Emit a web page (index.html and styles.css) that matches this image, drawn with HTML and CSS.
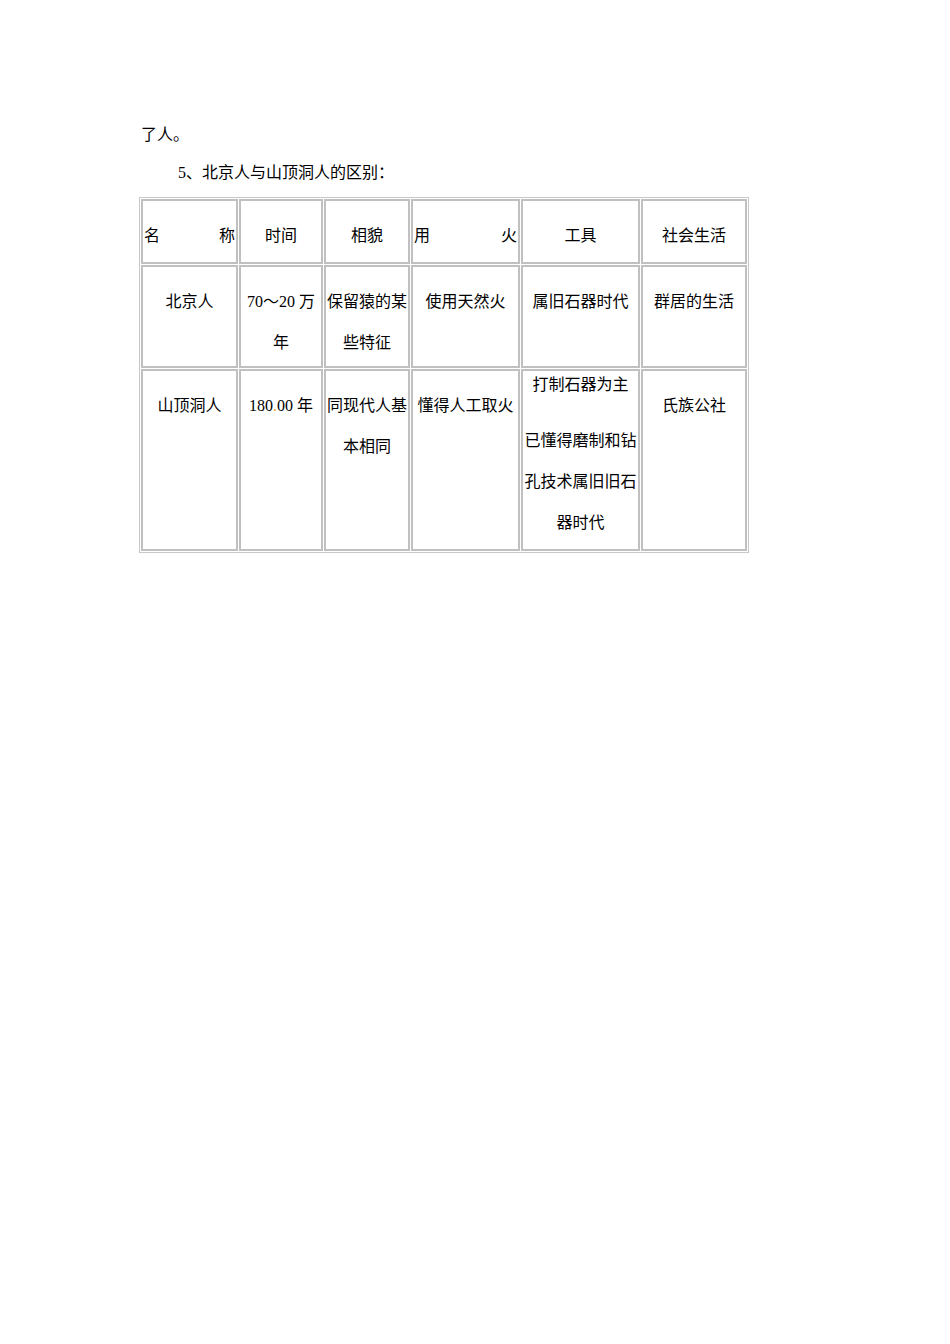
FILE: index.html
```html
<!DOCTYPE html>
<html lang="zh-CN">
<head>
<meta charset="utf-8">
<title>北京人与山顶洞人的区别</title>
<link rel="stylesheet" href="styles.css">
</head>
<body>
<div class="page">
  <p class="line">了人。</p>
  <p class="line indent">5、北京人与山顶洞人的区别：</p>
  <table class="cmp">
    <tr class="r1">
      <td class="c1"><div class="spread"><span>名</span><span>称</span></div></td>
      <td class="c2">时间</td>
      <td class="c3">相貌</td>
      <td class="c4"><div class="spread"><span>用</span><span>火</span></div></td>
      <td class="c5">工具</td>
      <td class="c6">社会生活</td>
    </tr>
    <tr class="r2">
      <td>北京人</td>
      <td>70～20 万年</td>
      <td>保留猿的某些特征</td>
      <td>使用天然火</td>
      <td>属旧石器时代</td>
      <td>群居的生活</td>
    </tr>
    <tr class="r3">
      <td>山顶洞人</td>
      <td>180<span class="dot">.</span>00 年</td>
      <td>同现代人基本相同</td>
      <td>懂得人工取火</td>
      <td class="tools"><p class="first">打制石器为主</p><p>已懂得磨制和钻孔技术属旧旧石器时代</p></td>
      <td>氏族公社</td>
    </tr>
  </table>
</div>
</body>
</html>
```
FILE: styles.css
```css
html, body {
  margin: 0;
  padding: 0;
  background: #ffffff;
}

body {
  font-family: "Liberation Serif", "Noto Sans CJK SC", serif;
  font-size: 16px;
  color: #000000;
}

.page {
  padding: 116px 0 0 141px;
}

.line {
  margin: 0;
  line-height: 38px;
}

.indent {
  text-indent: 37px;
}

.cmp {
  margin: 5px 0 0 -2px;
  width: 610px;
  table-layout: fixed;
  border-collapse: separate;
  border-spacing: 1px;
  border: 1px solid #c8c8c8;
}

.cmp td {
  box-sizing: border-box;
  border: 2px solid #c0c0c0;
  padding: 14px 1px 0 1px;
  vertical-align: top;
  text-align: center;
  line-height: 41px;
}

.cmp td.c1 { width: 97px; }
.cmp td.c2 { width: 84px; }
.cmp td.c3 { width: 86px; }
.cmp td.c4 { width: 109px; }
.cmp td.c5 { width: 119px; }

.r1 td { height: 65px; }
.r2 td { height: 103px; }
.r3 td { height: 182px; }

.spread {
  display: flex;
  justify-content: space-between;
}

.dot {
  color: #e0a830;
}

.cmp td.tools {
  padding-top: 0;
}

.tools p {
  margin: 0;
}

.tools .first {
  line-height: 27px;
  margin-bottom: 22px;
}
```
